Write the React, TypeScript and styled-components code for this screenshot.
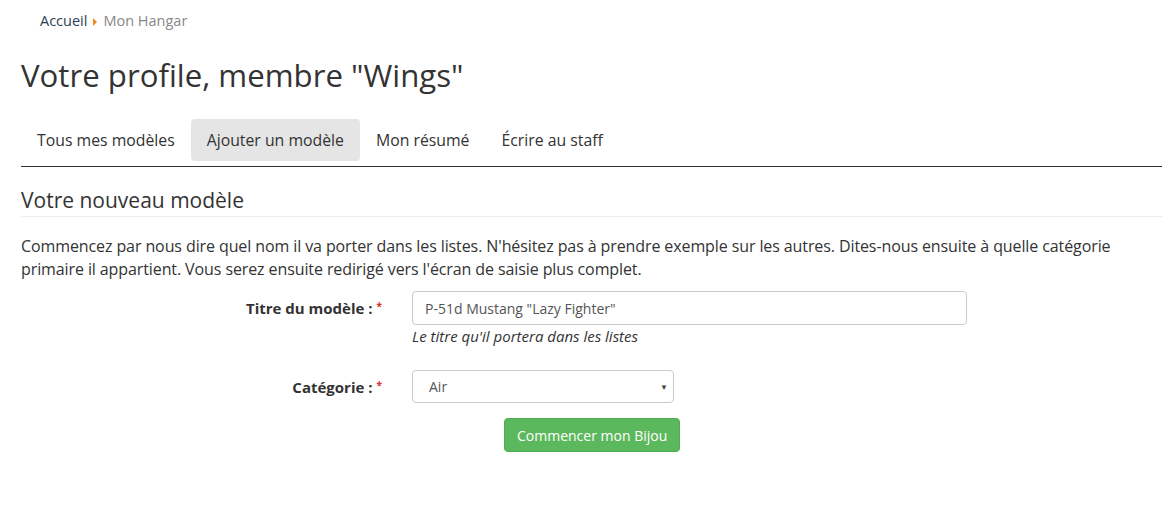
import styled, { createGlobalStyle } from 'styled-components';

const GlobalStyle = createGlobalStyle`
  body {
    margin: 0;
    background: #fff;
    font-family: "Open Sans", Lato, sans-serif;
    color: #333;
  }
`;

const tabs = ['Tous mes modèles', 'Ajouter un modèle', 'Mon résumé', 'Écrire au staff'];

const App = () => {
  return (
    <Page>
      <GlobalStyle />
      <Breadcrumb>
        <CrumbLink>Accueil</CrumbLink>
        <CrumbArrow />
        <CrumbCurrent>Mon Hangar</CrumbCurrent>
      </Breadcrumb>

      <Title>Votre profile, membre "Wings"</Title>

      <Tabs>
        {tabs.map((tab) => (
          <Tab key={tab} active={tab === 'Ajouter un modèle'}>
            {tab}
          </Tab>
        ))}
      </Tabs>

      <SectionTitle>Votre nouveau modèle</SectionTitle>

      <Intro>
        Commencez par nous dire quel nom il va porter dans les listes. N'hésitez pas à prendre exemple sur les
        autres. Dites-nous ensuite à quelle catégorie primaire il appartient. Vous serez ensuite redirigé vers
        l'écran de saisie plus complet.
      </Intro>

      <Form>
        <FormRow>
          <Label>
            Titre du modèle :<Required>*</Required>
          </Label>
          <Field>
            <TextInput defaultValue='P-51d Mustang "Lazy Fighter"' />
            <HelpText>Le titre qu'il portera dans les listes</HelpText>
          </Field>
        </FormRow>

        <FormRow spacing={24}>
          <Label>
            Catégorie :<Required>*</Required>
          </Label>
          <Field>
            <SelectBox>
              <span>Air</span>
              <SelectArrow>▼</SelectArrow>
            </SelectBox>
          </Field>
        </FormRow>

        <ButtonRow>
          <SubmitButton type="button">Commencer mon Bijou</SubmitButton>
        </ButtonRow>
      </Form>
    </Page>
  );
};

export default App;

const Page = styled.div`
  width: 1141px;
  padding: 0 14px 40px 21px;
`;

const Breadcrumb = styled.div`
  display: flex;
  align-items: center;
  gap: 6px;
  padding: 10px 0 0 19px;
  height: 20px;
  font-size: 14.5px;
`;

const CrumbLink = styled.span`
  color: #2c3e50;
`;

const CrumbArrow = styled.span`
  width: 0;
  height: 0;
  margin-top: 3px;
  border-top: 4px solid transparent;
  border-bottom: 4px solid transparent;
  border-left: 4px solid #f08a24;
`;

const CrumbCurrent = styled.span`
  color: #888;
`;

const Title = styled.h1`
  margin: 25px 0 0;
  font-size: 31.2px;
  font-weight: 400;
  line-height: 40px;
  color: #333;
`;

const Tabs = styled.div`
  display: flex;
  margin-top: 24px;
  padding-bottom: 5px;
  border-bottom: 1px solid #333;
`;

const Tab = styled.div<{ active?: boolean }>`
  padding: 0 16px;
  height: 42px;
  line-height: 42px;
  font-size: 15.8px;
  color: #333;
  border-radius: 4px;
  background: ${(props) => (props.active ? '#e5e5e5' : 'transparent')};
`;

const SectionTitle = styled.h3`
  margin: 20px 0 0;
  padding-bottom: 3px;
  font-size: 21px;
  font-weight: 400;
  line-height: 26px;
  color: #333;
  border-bottom: 1px solid #eee;
`;

const Intro = styled.p`
  margin: 18px 0 0;
  font-size: 16px;
  letter-spacing: -0.1px;
  line-height: 23px;
  color: #333;
`;

const Form = styled.div`
  margin-top: 10px;
`;

const FormRow = styled.div<{ spacing?: number }>`
  display: grid;
  grid-template-columns: 361px 555px;
  column-gap: 30px;
  margin-top: ${(props) => props.spacing ?? 0}px;
`;

const Label = styled.label`
  padding-top: 7px;
  text-align: right;
  font-size: 15px;
  font-weight: 700;
  line-height: 20px;
  color: #333;
`;

const Required = styled.span`
  position: relative;
  top: -4px;
  margin-left: 4px;
  font-size: 10px;
  color: #d9302c;
`;

const Field = styled.div`
  display: flex;
  flex-direction: column;
`;

const TextInput = styled.input`
  box-sizing: border-box;
  width: 555px;
  height: 34px;
  padding: 6px 12px;
  border: 1px solid #ccc;
  border-radius: 4px;
  font-family: "Open Sans", Lato, sans-serif;
  font-size: 14px;
  color: #555;
  outline: none;
`;

const HelpText = styled.span`
  margin-top: 1px;
  font-size: 15px;
  font-style: italic;
  line-height: 20px;
  color: #333;
`;

const SelectBox = styled.div`
  box-sizing: border-box;
  display: flex;
  align-items: center;
  justify-content: space-between;
  width: 262px;
  height: 33px;
  padding: 0 5px 0 16px;
  border: 1px solid #ccc;
  border-radius: 4px;
  font-size: 14px;
  color: #555;
`;

const SelectArrow = styled.span`
  font-size: 8px;
  color: #444;
`;

const ButtonRow = styled.div`
  display: flex;
  padding-left: 483px;
  margin-top: 15px;
`;

const SubmitButton = styled.button`
  height: 34px;
  padding: 0 12px;
  border: 1px solid #4cae4c;
  border-radius: 4px;
  background: #5cb85c;
  font-family: "Open Sans", Lato, sans-serif;
  font-size: 14px;
  color: #fff;
  cursor: pointer;
`;
